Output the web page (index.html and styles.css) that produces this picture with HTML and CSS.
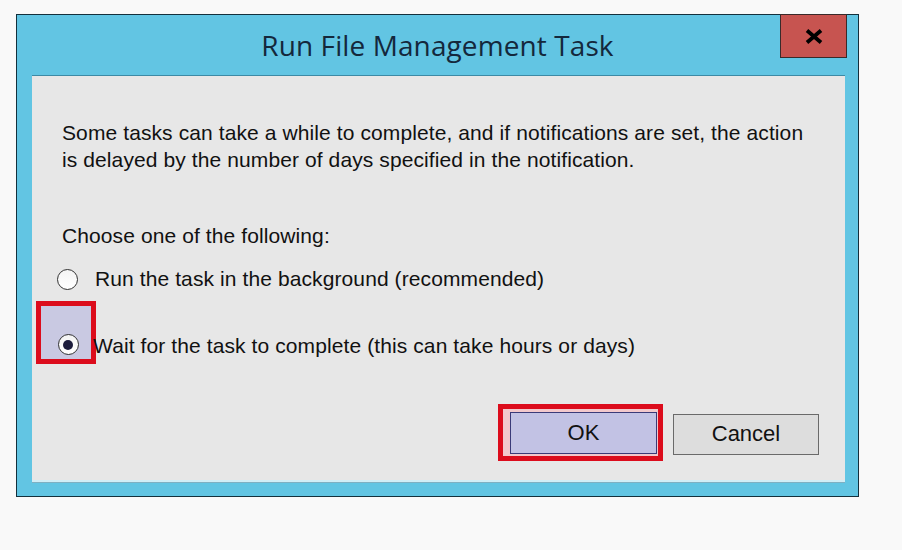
FILE: index.html
```html
<!DOCTYPE html>
<html lang="en">
<head>
    <meta charset="UTF-8">
    <title>Run File Management Task</title>
    <link rel="stylesheet" href="styles.css">
</head>
<body>
    <div class="ventana">
        <div class="barra-titulo">
            <div></div>
            <h1 class="titulo">Run File Management Task</h1>
            <button class="cerrar" type="button">
                <svg width="18" height="15" viewBox="0 0 18 15">
                    <path d="M2 1.5 L16 13.5 M16 1.5 L2 13.5" stroke="#000" stroke-width="3.8" fill="none"/>
                </svg>
            </button>
        </div>

        <div class="panel">
            <p class="mensaje">Some tasks can take a while to complete, and if notifications are set, the action<br>is delayed by the number of days specified in the notification.</p>

            <p class="pregunta">Choose one of the following:</p>

            <div class="opcion opcion-1">
                <span class="radio"></span>
                <span class="texto">Run the task in the background (recommended)</span>
            </div>

            <div class="opcion opcion-2">
                <span class="resaltado"><span class="radio marcado"></span></span>
                <span class="texto">Wait for the task to complete (this can take hours or days)</span>
            </div>

            <div class="botones">
                <span class="resaltado-boton"><button class="boton boton-ok" type="button">OK</button></span>
                <button class="boton boton-cancelar" type="button">Cancel</button>
            </div>
        </div>
    </div>
</body>
</html>
```

FILE: styles.css
```css
/* Estilos CSS */
body {
    margin: 0;
    background-color: #f9f9f9;
    font-family: "Liberation Sans", Arial, sans-serif;
    color: #111111;
}

.ventana {
    margin: 14px 0 0 16px;
    width: 841px;
    height: 481px;
    border: 1px solid #14303c;
    background-color: #62c5e3;
    display: flex;
    flex-direction: column;
}

/* Barra de título */
.barra-titulo {
    height: 60px;
    display: grid;
    grid-template-columns: 1fr auto 1fr;
    align-items: start;
}

.titulo {
    margin: 14px 0 0 0;
    font-family: "Open Sans", sans-serif;
    font-weight: normal;
    font-size: 28px;
    line-height: 32px;
    letter-spacing: 0.1px;
    color: #14283c;
}

.cerrar {
    justify-self: end;
    margin: -1px 11px 0 0;
    width: 67px;
    height: 44px;
    background-color: #c75450;
    border: 1px solid #3a2a2a;
    padding: 0;
    display: flex;
    align-items: center;
    justify-content: center;
}

/* Panel interior */
.panel {
    margin: 0 13px 13px 15px;
    flex: 1;
    background-color: #e7e7e7;
    border-top: 1px solid #3d8aa5;
    border-bottom: 1px solid #7fb0c2;
    box-shadow: inset 0 -2px 0 #d2eef6;
    padding: 43px 0 0 30px;
    font-size: 21px;
    letter-spacing: 0.1px;
}

.mensaje {
    margin: 0;
    line-height: 27px;
}

.pregunta {
    margin: 49px 0 0 0;
    line-height: 27px;
}

.opcion {
    display: flex;
}

.opcion-1 {
    align-items: center;
    margin: 18px 0 0 -5px;
}

.opcion-1 .texto {
    margin-left: 17px;
}

.opcion-2 {
    align-items: flex-start;
    margin: 10px 0 0 -26px;
}

.opcion-2 .texto {
    margin-left: -3px;
    margin-top: 31px;
    line-height: 27px;
}

.radio {
    width: 19px;
    height: 19px;
    border: 1px solid #333333;
    border-radius: 50%;
    background: linear-gradient(#f4f4f4, #ffffff);
    display: flex;
    align-items: center;
    justify-content: center;
}

.radio.marcado::after {
    content: "";
    width: 10px;
    height: 10px;
    border-radius: 50%;
    background-color: #1c1c3c;
}

.resaltado {
    width: 50px;
    height: 53px;
    border: 5px solid #dc0c1c;
    background-color: #c9c9e2;
    display: flex;
    align-items: flex-start;
    justify-content: center;
}

.resaltado .radio {
    margin: 28px 0 0 4px;
}

/* Botones */
.botones {
    display: flex;
    align-items: center;
    margin: 40px 0 0 436px;
}

.resaltado-boton {
    border: 5px solid #dc0c1c;
    background-color: #f2c8cc;
    padding: 3px 1px 2px 7px;
    display: flex;
}

.boton {
    font-family: "Liberation Sans", Arial, sans-serif;
    font-size: 22px;
    color: #111111;
    padding: 0;
}

.boton-ok {
    width: 147px;
    height: 42px;
    background-color: #c2c2e4;
    border: 1px solid #3a3a78;
}

.boton-cancelar {
    margin-left: 10px;
    margin-top: 3px;
    width: 146px;
    height: 41px;
    background-color: #dddddd;
    border: 1px solid #6a6a6a;
}
```
